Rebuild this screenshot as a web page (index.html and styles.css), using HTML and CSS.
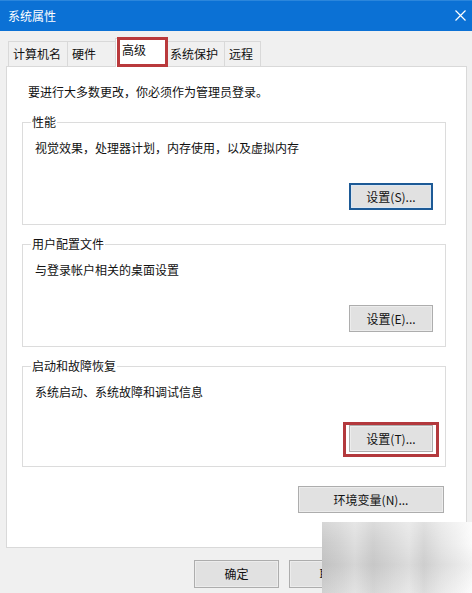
FILE: index.html
```html
<!DOCTYPE html>
<html lang="zh-CN">
<head>
<meta charset="utf-8">
<title>系统属性</title>
<link rel="stylesheet" href="styles.css">
</head>
<body>
<div class="window">
  <div class="titlebar">
    <span class="title">系统属性</span>
    <svg class="close" width="11" height="11" viewBox="0 0 11 11"><path d="M0.5 0.5 L10.5 10.5 M10.5 0.5 L0.5 10.5" stroke="#fff" stroke-width="1.2" fill="none"/></svg>
  </div>
  <div class="tabs">
    <div class="tab t1">计算机名</div>
    <div class="tab t2">硬件</div>
    <div class="tab active">高级</div>
    <div class="tab t4">系统保护</div>
    <div class="tab t5">远程</div>
  </div>
  <div class="panel">
    <p class="intro">要进行大多数更改，你必须作为管理员登录。</p>
    <div class="group g1">
      <div class="legend">性能</div>
      <p class="desc">视觉效果，处理器计划，内存使用，以及虚拟内存</p>
      <div class="actions"><button class="btn default">设置(S)...</button></div>
    </div>
    <div class="group g2">
      <div class="legend">用户配置文件</div>
      <p class="desc">与登录帐户相关的桌面设置</p>
      <div class="actions"><button class="btn">设置(E)...</button></div>
    </div>
    <div class="group g3">
      <div class="legend">启动和故障恢复</div>
      <p class="desc">系统启动、系统故障和调试信息</p>
      <div class="actions"><button class="btn marked">设置(T)...</button></div>
    </div>
    <div class="env-row"><button class="btn env">环境变量(N)...</button></div>
  </div>
  <div class="footer">
    <button class="btn foot">确定</button>
    <button class="btn foot">取消</button>
    <button class="btn foot">应用(A)</button>
  </div>
  <div class="watermark"></div>
</div>
</body>
</html>
```

FILE: styles.css
```css
* { box-sizing: border-box; }
html, body {
  margin: 0;
  padding: 0;
}
body {
  width: 472px;
  height: 593px;
  overflow: hidden;
  background: #f0f0f0;
  font-family: "Noto Sans CJK SC", "Noto Sans", sans-serif;
  font-size: 12px;
  line-height: 16px;
  color: #111;
}
.window {
  position: relative;
  width: 472px;
  height: 593px;
}
.titlebar {
  height: 31px;
  background: #0b71d5;
  border-top: 1px solid #2b86dc;
  display: flex;
  align-items: center;
  justify-content: space-between;
  padding: 0 6px 0 8px;
  color: #fff;
}
.title { font-size: 12px; }
.close { display: block; margin-top: -2px; }

.tabs {
  height: 35px;
  display: flex;
  align-items: flex-end;
  padding-left: 8px;
}
.tab {
  height: 25px;
  line-height: 23px;
  border: 1px solid #d9d9d9;
  border-bottom: none;
  border-right: none;
  background: #f0f0f0;
  padding-left: 4px;
  white-space: nowrap;
}
.t1 { width: 59px; }
.t2 { width: 48px; }
.t4 { width: 57px; padding-left: 2px; }
.t5 { width: 37px; border-right: 1px solid #d9d9d9; }
.tab.active {
  position: relative;
  z-index: 2;
  width: 52px;
  height: 29px;
  margin-bottom: -1px;
  padding-left: 6px;
  line-height: 22px;
  background: #fff;
}
.tab.active::after {
  content: "";
  position: absolute;
  left: 1px;
  top: -2px;
  right: -1px;
  bottom: 0;
  border: 3px solid #b9393c;
}

.panel {
  position: relative;
  margin-left: 6px;
  width: 461px;
  height: 482px;
  background: #fff;
  border: 1px solid #d9d9d9;
  padding: 17px 20px 0 15px;
}
.intro {
  margin: 0 0 0 6px;
}
.group {
  border: 1px solid #dcdcdc;
  padding-bottom: 14px;
  margin-top: 19px;
}
.g1 { margin-top: 22px; }
.legend {
  width: fit-content;
  margin: -9px 0 0 8px;
  padding: 0 1px;
  background: #fff;
}
.desc {
  margin: 10px 0 0 12px;
}
.actions {
  display: flex;
  justify-content: flex-end;
  padding-right: 12px;
  margin-top: 27px;
}
.g3 .actions { margin-top: 25px; }

.btn {
  font-family: inherit;
  font-size: 12px;
  line-height: 16px;
  color: #111;
  background: #e1e1e1;
  border: 1px solid #adadad;
  box-shadow: inset 0 0 0 1px #ececec;
  width: 84px;
  height: 27px;
  padding: 0;
  margin: 0;
}
.btn.default {
  border: 2px solid #1d5a96;
  box-shadow: inset 0 0 0 1px #dbe7f3;
}
.btn.marked {
  position: relative;
}
.btn.marked::after {
  content: "";
  position: absolute;
  left: -7px;
  right: -7px;
  top: -4px;
  bottom: -6px;
  border: 3px solid #b3393d;
}
.env-row {
  display: flex;
  justify-content: flex-end;
  padding-right: 2px;
  margin-top: 19px;
}
.btn.env { width: 146px; }

.footer {
  display: flex;
  gap: 10px;
  padding-left: 194px;
  margin-top: 12px;
}
.btn.foot {
  width: 85px;
  height: 28px;
}

.watermark {
  position: absolute;
  left: 322px;
  top: 522px;
  width: 150px;
  height: 71px;
  background:
    linear-gradient(180deg, rgba(255,255,255,0.25) 0%, rgba(255,255,255,0) 30%, rgba(0,0,0,0.04) 60%, rgba(255,255,255,0.15) 100%),
    linear-gradient(90deg, #c9c9c9 0%, #d3d3d3 12%, #dedede 22%, #cfcfcf 34%, #d9d9d9 46%, #e4e4e4 58%, #d6d6d6 68%, #e6e6e6 80%, #f2f2f2 92%, #fbfbfb 100%);
}
```
